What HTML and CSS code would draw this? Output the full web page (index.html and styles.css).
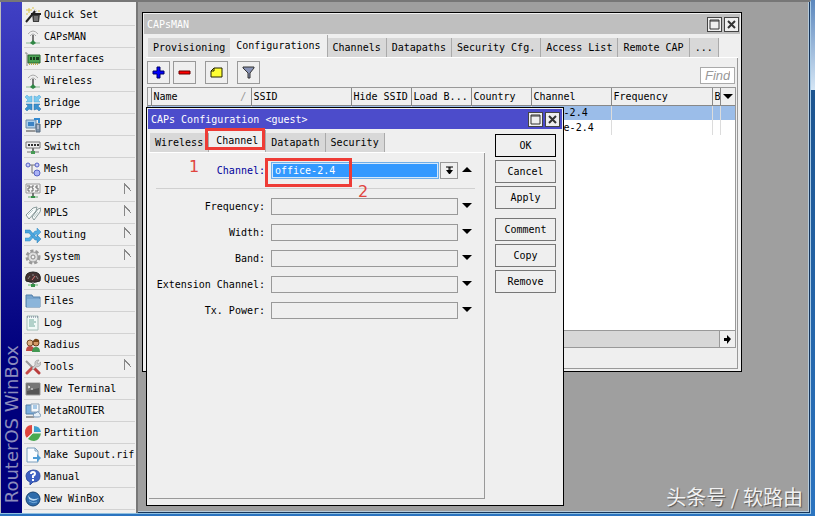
FILE: index.html
```
<!DOCTYPE html>
<html lang="en">
<head>
    <meta charset="UTF-8">
    <meta name="viewport" content="width=device-width, initial-scale=1.0">
    <title>RouterOS WinBox</title>
    <link rel="stylesheet" href="styles.css">
</head>
<body>
    <div class="app">
        <div class="brand"><span>RouterOS WinBox</span></div>

        <nav class="menu">
            <a href="#"><svg viewBox="0 0 16 16"><path d="M7 7h8l-1 8H8z" fill="#3c3c3c"/><path d="M6 7h10" stroke="#222" stroke-width="2"/><path d="M10 9v5M12 9v5" stroke="#aaa"/><path d="M1 15L11 3" stroke="#222" stroke-width="2"/><path d="M10 4l2-2" stroke="#eee" stroke-width="2"/><path d="M4 1v5M1 3h6M8 0v2M1 7h2M13 4h2" stroke="#dcc544"/></svg>Quick Set</a>
            <a href="#"><svg viewBox="0 0 16 16"><path d="M3 5q5-6 10 0M5 7q3-4 6 0" fill="none" stroke="#aaa"/><path d="M8 6v7" stroke="#777" stroke-width="2"/><path d="M1 14h14" stroke="#8ab895"/><path d="M8 11l3 3-3 2-3-2z" fill="#2f8744"/></svg>CAPsMAN</a>
            <a href="#"><svg viewBox="0 0 16 16"><path d="M0 2h2v13" fill="none" stroke="#888"/><path d="M3 4h12v8H3z" fill="#4ba354" stroke="#286630"/><path d="M5 6h2v3H5zM8 6h2v3H8zM11 6h3v3h-3z" fill="#173c1d"/><path d="M4 13h9" stroke="#b7a84c" stroke-width="2" stroke-dasharray="1 1"/></svg>Interfaces</a>
            <a href="#"><svg viewBox="0 0 16 16"><path d="M3 5q5-6 10 0M5 7q3-4 6 0" fill="none" stroke="#aaa"/><path d="M8 6v7" stroke="#777" stroke-width="2"/><path d="M1 14h14" stroke="#8ab895"/><path d="M8 11l3 3-3 2-3-2z" fill="#2f8744"/></svg>Wireless</a>
            <a href="#"><svg viewBox="0 0 16 16"><path d="M0 2l2-2 2 2 3-1v6H1l2-2zM16 2l-2-2-2 2-3-1v6h6l-2-2z" fill="#7ccbf0" stroke="#4ea3d3" stroke-width=".5"/><path d="M0 14l2 2 2-2 3 1V9H1l2 2zM16 14l-2 2-2-2-3 1V9h6l-2 2z" fill="#3b92cf" stroke="#276ca6" stroke-width=".5"/></svg>Bridge</a>
            <a href="#"><svg viewBox="0 0 16 16"><path d="M1 3h10v8H1z" fill="#a9cdec" stroke="#6f8aa5"/><path d="M3 5h6v4H3z" fill="#3b82c4"/><path d="M1 14h9" stroke="#999" stroke-width="2"/><path d="M11 7h4v8h-4z" fill="#7c93aa" stroke="#566b80"/><path d="M9 2h5v4" fill="none" stroke="#3188d0" stroke-width="2"/><path d="M12 9h2M12 11h2" stroke="#dde"/></svg>PPP</a>
            <a href="#"><svg viewBox="0 0 16 16"><path d="M1 3h14v6H1z" fill="#eee" stroke="#777"/><path d="M3 6h2M6 6h2M9 6h2M12 6h2" stroke="#333" stroke-width="2"/><path d="M8 9v4" stroke="#777" stroke-width="2"/><path d="M2 13h12" stroke="#777"/><path d="M6 12h4v3H6z" fill="#469a54"/></svg>Switch</a>
            <a href="#"><svg viewBox="0 0 16 16"><path d="M3 4h4v8h4M7 4h5" fill="none" stroke="#777"/><circle cx="3" cy="4" r="2" fill="#c5caf7" stroke="#5662c5"/><circle cx="12" cy="4" r="2" fill="#c5caf7" stroke="#5662c5"/><circle cx="12" cy="12" r="3" fill="#aab2f5" stroke="#5662c5"/></svg>Mesh</a>
            <a href="#"><svg viewBox="0 0 16 16"><path d="M1 1h14v9H1z" fill="#f4f4f4" stroke="#999"/><path d="M2 3h3v2H3v3h2M9 3H7v2h1v3H6M13 3h-2v2h2v3h-3" fill="none" stroke="#666"/><path d="M8 10v4" stroke="#777" stroke-width="2"/><path d="M3 14h10" stroke="#68a875"/><path d="M6 13h4v2H6z" fill="#348f47"/></svg>IP<i class="flag"></i></a>
            <a href="#"><svg viewBox="0 0 16 16"><path d="M1 10L8 3l4-1-1 4-7 8zM7 12l6-8 3-1-1 4-6 8z" fill="#f7fafa" stroke="#879999"/><path d="M3 10l5-5M9 12l4-5" stroke="#bcc"/></svg>MPLS<i class="flag"></i></a>
            <a href="#"><svg viewBox="0 0 16 16"><path d="M0 11h4l6-7h2V1l4 4-4 4V7h-1l-6 7H0z" fill="#55aee3" stroke="#378bc0" stroke-width=".5"/><path d="M0 3h5l6 7h1V8l4 4-4 4v-3h-2L4 6H0z" fill="#4ba5de" stroke="#287cb5" stroke-width=".5"/></svg>Routing<i class="flag"></i></a>
            <a href="#"><svg viewBox="0 0 16 16"><circle cx="8" cy="8" r="6" fill="none" stroke="#999" stroke-width="3" stroke-dasharray="3 2"/><circle cx="8" cy="8" r="5" fill="#ddd" stroke="#999"/><circle cx="8" cy="8" r="2" fill="#f3f3f3" stroke="#888"/></svg>System<i class="flag"></i></a>
            <a href="#"><svg viewBox="0 0 16 16"><path d="M1 10Q-1 1 8 1t7 9q-7 3-14 0z" fill="#433" stroke="#222"/><path d="M3 8l2-3M8 3v2M13 8l-2-3" stroke="#888"/><path d="M7 9l3-4" stroke="#d77"/><path d="M8 11v3" stroke="#777" stroke-width="2"/><path d="M3 14h10" stroke="#61b36e"/><path d="M6 13h4v3H6z" fill="#348f47"/></svg>Queues</a>
            <a href="#"><svg viewBox="0 0 16 16"><path d="M1 2h6l1 2h7v10H1z" fill="#78a5ce" stroke="#5380aa"/><path d="M2 6h13v8H2z" fill="#8bb5da"/></svg>Files</a>
            <a href="#"><svg viewBox="0 0 16 16"><path d="M2 1h11v14H2z" fill="#f1faf7" stroke="#a3bdb6"/><path d="M2 2h11" stroke="#668" stroke-dasharray="1 1"/><path d="M4 5h5M4 7h7M4 9h5M4 11h6" stroke="#73a99c"/></svg>Log</a>
            <a href="#"><svg viewBox="0 0 16 16"><path d="M1 14q0-5 4-5t5 5z" fill="#bd4a45"/><circle cx="5" cy="6" r="3" fill="#e0b083" stroke="#76502d"/><path d="M7 15q0-5 4-5t4 5z" fill="#439853"/><circle cx="11" cy="6" r="3" fill="#d79a66" stroke="#68401f"/><path d="M8 5q1-4 4-3t2 3" fill="#754417"/></svg>Radius</a>
            <a href="#"><svg viewBox="0 0 16 16"><path d="M1 2l7 7" stroke="#999" stroke-width="2"/><path d="M9 9l5 5" stroke="#ba3d3d" stroke-width="3" stroke-linecap="round"/><path d="M2 14l5-5" stroke="#c74b49" stroke-width="3" stroke-linecap="round"/><path d="M7 9l3-3q-1-5 4-5l-2 3 1 1 3-2q0 5-5 5l-3 3z" fill="#ccc" stroke="#888" stroke-width=".5"/></svg>Tools<i class="flag"></i></a>
            <a href="#"><svg viewBox="0 0 16 16"><path d="M1 2h14v12H1z" fill="#555" stroke="#999"/><path d="M2 3h12v4L2 10z" fill="#777"/><path d="M3 5l2 1-2 1M6 8h2" fill="none" stroke="#eee"/></svg>New Terminal</a>
            <a href="#"><svg viewBox="0 0 16 16"><path d="M1 2h9v9H1z" fill="#79aede" stroke="#507ca4"/><path d="M6 1h8v8H6z" fill="#f4f8fb" stroke="#8ca2b7"/><path d="M8 3h4M8 5h4" stroke="#5c9bd1"/><path d="M1 13h8v2H1z" fill="#999"/><path d="M9 14q-2-4 2-4 2-3 4 1 2 3-2 3z" fill="#e6f0f8" stroke="#7999b8"/></svg>MetaROUTER</a>
            <a href="#"><svg viewBox="0 0 16 16"><path d="M7 8V0Q0 0 0 8q0 3 2 5z" fill="#df463e"/><path d="M9 7V1q6 0 7 6z" fill="#3d9fcf"/><path d="M16 8H8l-5 6q3 2 6 2 6-1 7-8z" fill="#49aa50"/><path d="M8 0v8h8M8 8l-6 5" fill="none" stroke="#eee"/></svg>Partition</a>
            <a href="#"><svg viewBox="0 0 16 16"><path d="M2 1h8l3 3v11H2z" fill="#f9fcff" stroke="#7b9ebb"/><path d="M10 1v3h3" fill="none" stroke="#7b9ebb"/><path d="M8 10h4V7l4 4-4 4v-3H8z" fill="#4c9bd5"/></svg>Make Supout.rif</a>
            <a href="#"><svg viewBox="0 0 16 16"><path d="M8 1q7 0 7 6t-7 6l-3 3v-3Q1 12 1 7t7-6z" fill="#3e61c3" stroke="#3250a4"/><path d="M6 5q0-2 2-2t2 2q0 1-2 2v2M8 10v2" fill="none" stroke="#fff" stroke-width="2"/></svg>Manual</a>
            <a href="#"><svg viewBox="0 0 16 16"><circle cx="8" cy="8" r="7" fill="#2f6cab" stroke="#184472"/><path d="M3 4q3 6 11 3-5 5-10 1z" fill="#bcdcf5"/><path d="M4 10q4 3 8 1" fill="none" stroke="#70a8d8"/></svg>New WinBox</a>
        </nav>

        <main class="workspace">
            <section class="window capsman">
                <header class="titlebar">
                    <h2>CAPsMAN</h2>
                    <button class="win-btn" aria-label="Maximize"><svg viewBox="0 0 11 11"><path d="M1 2h9M1 1h9v9H1z" fill="none" stroke="#333"/></svg></button>
                    <button class="win-btn" aria-label="Close"><svg viewBox="0 0 11 11"><path d="M2 2l7 7M9 2l-7 7" stroke="#333" stroke-width="2"/></svg></button>
                </header>
                <div class="tabs">
                    <button>Provisioning</button>
                    <button class="active">Configurations</button>
                    <button>Channels</button>
                    <button>Datapaths</button>
                    <button>Security Cfg.</button>
                    <button>Access List</button>
                    <button>Remote CAP</button>
                    <button>...</button>
                </div>
                <div class="pane">
                    <div class="toolbar">
                        <button aria-label="Add"><svg viewBox="0 0 13 13"><path d="M5 1h3v4h4v3H8v4H5V8H1V5h4z" fill="#00f" stroke="#006"/></svg></button>
                        <button aria-label="Remove"><svg viewBox="0 0 13 13"><path d="M1 5h11v3H1z" fill="#f00" stroke="#600"/></svg></button>
                        <button class="gap" aria-label="Comment"><svg viewBox="0 0 13 13"><path d="M4 2h8v9H1V5z" fill="#ff3" stroke="#220"/><path d="M1 5h3V2" fill="none" stroke="#220"/></svg></button>
                        <button class="gap" aria-label="Filter"><svg viewBox="0 0 13 13"><path d="M1 1h11v1L8 7v5H6V7L1 2z" fill="#8792b5" stroke="#333"/></svg></button>
                        <input class="find" type="text" placeholder="Find" aria-label="Find">
                    </div>
                    <div class="grid">
                        <table>
                            <colgroup>
                                <col class="c-mark"><col class="c-wide"><col class="c-wide"><col class="c-small"><col class="c-small"><col class="c-small"><col class="c-mid"><col><col class="c-b"><col class="c-drop">
                            </colgroup>
                            <thead>
                                <tr>
                                    <th></th>
                                    <th><span class="sorted">Name<i>/</i></span></th>
                                    <th>SSID</th>
                                    <th>Hide SSID</th>
                                    <th>Load B...</th>
                                    <th>Country</th>
                                    <th>Channel</th>
                                    <th>Frequency</th>
                                    <th>B</th>
                                    <th><button class="drop" aria-label="Columns"></button></th>
                                </tr>
                            </thead>
                            <tbody>
                                <tr class="selected"><td></td><td></td><td></td><td></td><td></td><td></td><td>guest-2.4</td><td></td><td></td><td></td></tr>
                                <tr><td></td><td></td><td></td><td></td><td></td><td></td><td>office-2.4</td><td></td><td></td><td></td></tr>
                            </tbody>
                        </table>
                        <div class="scrollbar"><button aria-label="Scroll right"><svg viewBox="0 0 9 9"><path d="M1 3h3V0l4 4-4 5V6H1z"/></svg></button></div>
                    </div>
                    <div class="status"></div>
                </div>
            </section>

            <section class="window dialog">
                <header class="titlebar">
                    <h2>CAPs Configuration &lt;guest&gt;</h2>
                    <button class="win-btn" aria-label="Maximize"><svg viewBox="0 0 11 11"><path d="M1 2h9M1 1h9v9H1z" fill="none" stroke="#333"/></svg></button>
                    <button class="win-btn" aria-label="Close"><svg viewBox="0 0 11 11"><path d="M2 2l7 7M9 2l-7 7" stroke="#333" stroke-width="2"/></svg></button>
                </header>
                <div class="dialog-body">
                    <div class="dialog-main">
                        <div class="tabs">
                            <button>Wireless</button>
                            <button class="active">Channel</button>
                            <button>Datapath</button>
                            <button>Security</button>
                        </div>
                        <form class="fields">
                            <div class="field current">
                                <label for="channel">Channel:</label>
                                <input id="channel" type="text" value="office-2.4">
                                <button type="button" class="pick" aria-label="Choose"><svg viewBox="0 0 9 9"><path d="M1 1h7M4 1v3M5 1v3" stroke="#000"/><path d="M1 4h7L5 8H4z"/></svg></button>
                                <button type="button" class="toggle up" aria-label="Unset"></button>
                            </div>
                            <hr>
                            <div class="field">
                                <label for="frequency">Frequency:</label>
                                <input id="frequency" type="text">
                                <button type="button" class="toggle" aria-label="Set"></button>
                            </div>
                            <div class="field">
                                <label for="width">Width:</label>
                                <input id="width" type="text">
                                <button type="button" class="toggle" aria-label="Set"></button>
                            </div>
                            <div class="field">
                                <label for="band">Band:</label>
                                <input id="band" type="text">
                                <button type="button" class="toggle" aria-label="Set"></button>
                            </div>
                            <div class="field">
                                <label for="extension">Extension Channel:</label>
                                <input id="extension" type="text">
                                <button type="button" class="toggle" aria-label="Set"></button>
                            </div>
                            <div class="field">
                                <label for="power">Tx. Power:</label>
                                <input id="power" type="text">
                                <button type="button" class="toggle" aria-label="Set"></button>
                            </div>
                        </form>
                    </div>
                    <div class="actions">
                        <button class="default">OK</button>
                        <button>Cancel</button>
                        <button>Apply</button>
                        <button class="group">Comment</button>
                        <button>Copy</button>
                        <button>Remove</button>
                    </div>
                </div>
                <div class="mark mark-tab"></div>
                <div class="mark mark-field"></div>
                <span class="step step-one">1</span>
                <span class="step step-two">2</span>
            </section>

            <p class="credit" lang="zh">头条号 / 软路由</p>
        </main>
    </div>
</body>
</html>
```
FILE: styles.css
```
* {
    box-sizing: border-box;
}
body {
    margin: 0;
    padding: 0 4px 2px 0;
    font-family: 'DejaVu Sans Mono', 'Liberation Mono', monospace;
    font-size: 10px;
    line-height: 14px;
    color: #000;
    background: linear-gradient(#5b87bd, #d5e6f5 90px, #1d5590 90px, #2b74c0);
}
button, input {
    font: inherit;
    color: inherit;
    margin: 0;
    padding: 0;
    border-radius: 0;
}
h2, p {
    margin: 0;
    font-size: inherit;
    font-weight: normal;
}
.app {
    min-height: calc(100vh - 2px);
    display: grid;
    grid-template-columns: 22px 116px 1fr;
    background: #9f9f9f;
    border-top: 2px solid #777;
    border-right: 1px solid #a9cbe6;
    border-bottom: 1px solid #8fc0e0;
}

/* left side */
.brand {
    display: flex;
    align-items: flex-end;
    border-left: 1px solid #bbb;
    background: linear-gradient(#4040c4, #00007c 70%);
    padding-bottom: 10px;
}
.brand span {
    writing-mode: vertical-rl;
    transform: rotate(180deg);
    font-family: 'DejaVu Sans', sans-serif;
    font-size: 18px;
    line-height: 21px;
    color: #8c8cbc;
    white-space: nowrap;
}
.menu {
    background: #efefef;
    border-right: 2px solid #777;
    padding: 2px 1px 0 2px;
}
.menu a {
    display: flex;
    align-items: center;
    gap: 3px;
    height: 22px;
    padding-left: 1px;
    border-bottom: 1px solid #d2d2d2;
    color: #000;
    text-decoration: none;
    white-space: nowrap;
}
.menu svg {
    width: 16px;
    height: 16px;
    flex: none;
}
.flag {
    width: 7px;
    height: 11px;
    margin-left: auto;
    margin-right: 4px;
    margin-bottom: 4px;
    border-left: 1px solid #888;
    background: linear-gradient(50deg, transparent 50%, #888 50%, #888 60%, transparent 60%);
}

/* windows */
.workspace {
    position: relative;
    overflow: hidden;
    border-right: 1px solid #17365c;
    border-bottom: 1px solid #17365c;
    box-shadow: inset -1px -1px #b4cadb;
}
.window {
    position: absolute;
    display: flex;
    flex-direction: column;
    background: #efefef;
    border: 1px solid #000;
}
.capsman {
    top: 10px;
    left: 4px;
    right: 67px;
    bottom: 140px;
    padding: 1px 3px 2px;
}
.dialog {
    top: 105px;
    left: 8px;
    width: 418px;
    bottom: 6px;
    padding: 1px;
}
.titlebar {
    display: flex;
    align-items: center;
    gap: 2px;
    height: 20px;
    padding: 0 1px 0 3px;
    color: #fff;
    background: #bfbfbf;
    margin: 0 -2px;
}
.titlebar h2 {
    flex: 1;
    padding-top: 2px;
}
.dialog .titlebar {
    margin: 0;
    padding: 0 2px 0 3px;
    background: #4c4ccb;
}
.win-btn {
    display: flex;
    width: 15px;
    height: 15px;
    padding: 1px;
    border: 1px solid #444;
    background: #efefef;
}
.tabs {
    display: flex;
    align-items: flex-end;
    height: 24px;
    padding-left: 2px;
    border-bottom: 1px solid #fff;
}
.tabs button {
    height: 19px;
    padding: 1px 5px 0;
    border: 0;
    border-right: 1px solid #aaa;
    background: #d8d8d8;
    white-space: nowrap;
}
.tabs .active {
    height: 22px;
    padding: 0 7px 1px;
    background: #efefef;
}
.capsman .tabs .active {
    margin-left: -1px;
    padding: 0 6px 1px;
}
.pane {
    flex: 1;
    display: flex;
    flex-direction: column;
    border-right: 1px solid #999;
    border-bottom: 1px solid #999;
    padding: 3px 1px 0;
}
.toolbar {
    display: flex;
    gap: 3px;
    height: 26px;
}
.toolbar button {
    display: grid;
    place-items: center;
    width: 23px;
    height: 23px;
    border: 1px solid #999;
    background: #efefef;
}
.toolbar svg {
    width: 13px;
    height: 13px;
}
.toolbar .gap {
    margin-left: 6px;
}
.find {
    width: 35px;
    height: 17px;
    margin: 6px 1px 0 auto;
    border: 1px solid #aaa;
    background: #fff;
    padding: 0 4px;
    font: italic 13px 'Liberation Sans', sans-serif;
}
.find::placeholder {
    color: #999;
    opacity: 1;
}
.grid {
    flex: 1;
    display: flex;
    flex-direction: column;
    border: 1px solid #999;
    background: #fff;
}
table {
    width: 100%;
    table-layout: fixed;
    border-collapse: collapse;
}
th, td {
    height: 15px;
    padding: 0 0 0 2px;
    border-right: 1px solid #dcdcdc;
    text-align: left;
    font-weight: normal;
    line-height: 14px;
    white-space: nowrap;
    overflow: hidden;
}
td {
    line-height: 13px;
}
th {
    height: 17px;
    padding-top: 1px;
    background: #efefef;
    border-right-color: #888;
    border-bottom: 1px solid #888;
}
.c-mark { width: 3px; }
.c-wide { width: 100px; }
.c-small { width: 60px; }
.c-mid { width: 80px; }
.c-b { width: 8px; }
.c-drop { width: 15px; }
th:first-child, td:first-child, th:last-child, td:last-child {
    padding: 0;
}
th:last-child, td:last-child {
    border-right: 0;
}
.selected {
    background: #9bbde9;
}
.sorted {
    display: flex;
    justify-content: space-between;
    padding-right: 4px;
}
.sorted i {
    color: #999;
}
.drop {
    display: block;
    margin: 0 auto;
    border: 5px solid transparent;
    border-top-color: #000;
    border-bottom: 0;
    background: none;
}
.scrollbar {
    display: flex;
    justify-content: flex-end;
    height: 17px;
    margin-top: auto;
    border-top: 1px solid #999;
    background: #d7d7d7;
}
.scrollbar button {
    display: grid;
    place-items: center;
    width: 16px;
    border: 0;
    border-left: 1px solid #999;
    background: #efefef;
}
.scrollbar svg, .pick svg {
    width: 9px;
    height: 9px;
}
.status {
    height: 20px;
}

/* configuration dialog */
.dialog-body {
    flex: 1;
    display: flex;
    padding: 0 6px 5px 1px;
}
.dialog-main {
    flex: 1;
    display: flex;
    flex-direction: column;
}
.dialog .tabs {
    padding-left: 1px;
}
.fields {
    flex: 1;
    padding: 8px 9px 0 7px;
    border-right: 1px solid #999;
    border-bottom: 1px solid #999;
}
.field {
    display: flex;
    align-items: center;
    height: 18px;
    margin-bottom: 8px;
}
.field label {
    width: 109px;
    margin-right: 6px;
    padding-top: 1px;
    text-align: right;
    white-space: nowrap;
}
.field input {
    flex: 1;
    min-width: 0;
    height: 17px;
    padding: 0 3px;
    border: 1px solid #999;
    background: #efefef;
}
.current label {
    color: #00009c;
}
.current input {
    border-color: #6faee8;
    background: #3399ff;
    color: #fff;
    box-shadow: inset 0 0 0 1px #d4e8fb;
}
.pick {
    display: grid;
    place-items: center;
    width: 18px;
    height: 17px;
    margin-left: 1px;
    border: 1px solid #999;
    background: #efefef;
}
.toggle {
    margin: 0 3px 2px 4px;
    border: 5px solid transparent;
    border-top-color: #000;
    border-bottom: 0;
    background: none;
}
.toggle.up {
    border-top: 0;
    border-bottom: 5px solid #000;
}
hr {
    margin: 9px 0 8px;
    border: 0;
    border-top: 1px solid #d0d0d0;
}
.actions {
    display: flex;
    flex-direction: column;
    gap: 3px;
    width: 71px;
    padding: 5px 0 0 10px;
}
.actions button {
    height: 23px;
    padding-top: 1px;
    border: 1px solid #777;
    background: #efefef;
}
.actions .default {
    border-color: #000;
}
.actions .group {
    margin-top: 6px;
}

/* red guide marks */
.mark {
    position: absolute;
    border: 3px solid #ee3c36;
    pointer-events: none;
}
.mark-tab {
    top: 20px;
    left: 58px;
    width: 60px;
    height: 22px;
}
.mark-field {
    top: 50px;
    left: 118px;
    width: 87px;
    height: 29px;
}
.step {
    position: absolute;
    font-family: 'DejaVu Sans', sans-serif;
    font-size: 16px;
    line-height: 20px;
    color: #e0453f;
}
.step-one {
    top: 49px;
    left: 42px;
}
.step-two {
    top: 74px;
    left: 211px;
}
.credit {
    position: absolute;
    right: 6px;
    bottom: 3px;
    font-family: 'Noto Sans CJK SC', sans-serif;
    font-size: 20px;
    line-height: 24px;
    color: #f2f2f2;
    text-shadow: 1px 1px 1px #555;
}
```
